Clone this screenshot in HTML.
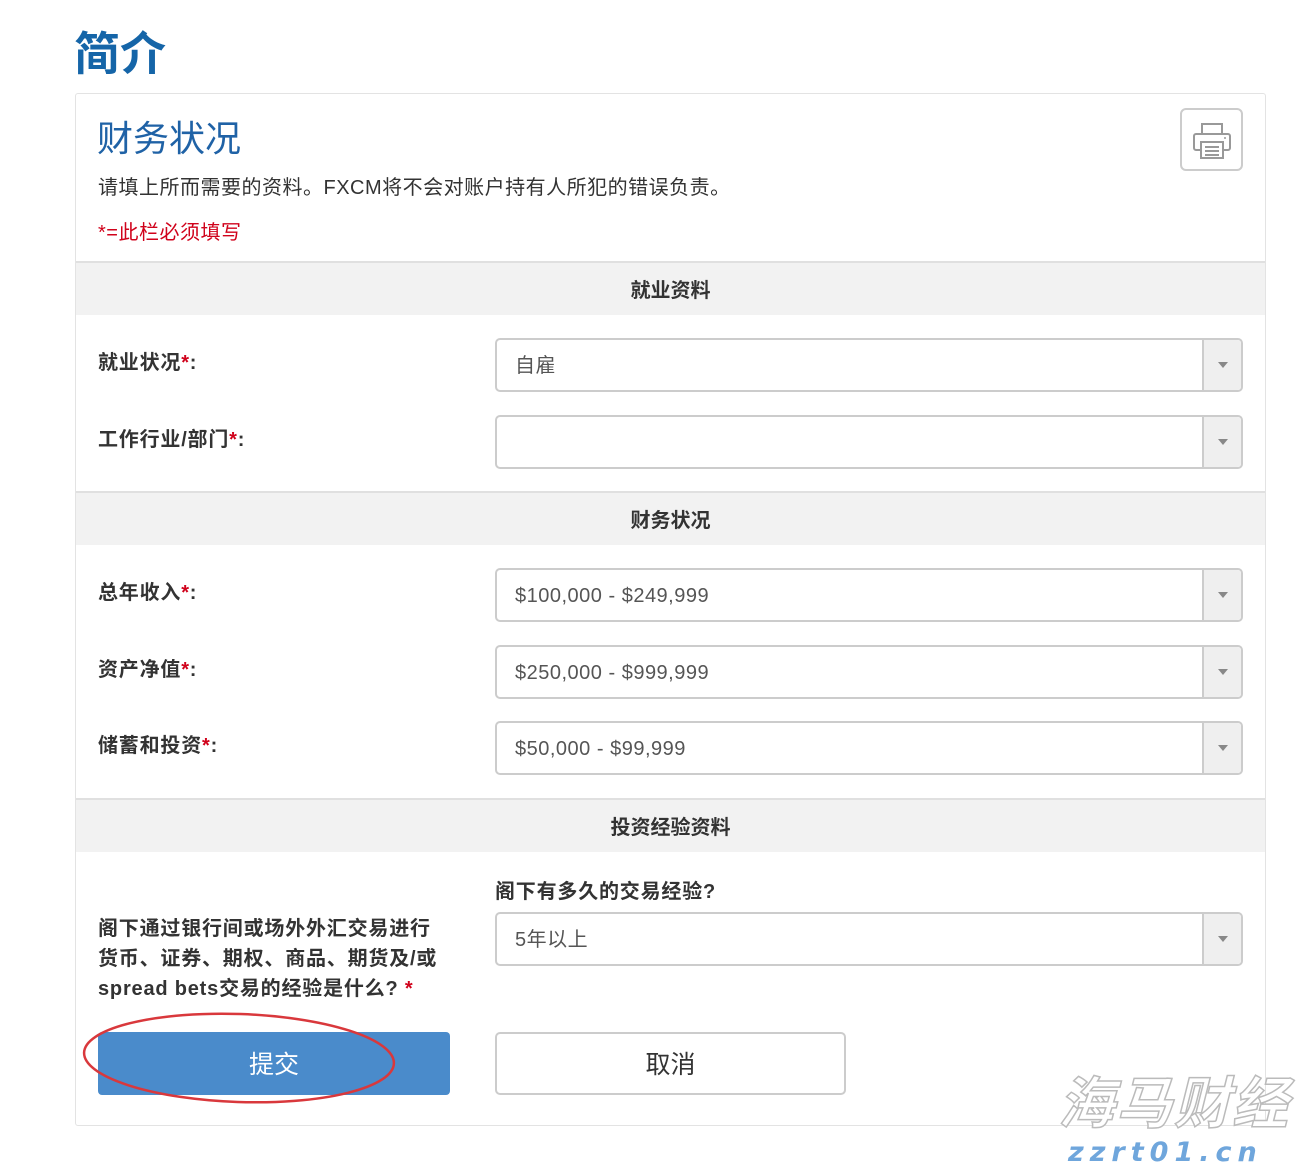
<!DOCTYPE html>
<html><head><meta charset="utf-8">
<style>
*{margin:0;padding:0;box-sizing:border-box}
body{width:1302px;height:1168px;background:#fff;position:relative;overflow:hidden;font-family:"Liberation Sans","Noto Sans CJK SC",sans-serif;color:#333}
.a{position:absolute}
.h1{left:74px;top:23px;font-size:46px;font-weight:bold;color:#1565a8;line-height:62px}
.card{left:75px;top:93px;width:1191px;height:1033px;border:1px solid #e3e3e3;border-radius:3px}
.sec{left:76px;width:1189px;height:54px;background:#f2f2f2;border-top:2px solid #e0e0e0;font-size:20px;font-weight:bold;text-align:center;line-height:56px;color:#333}
.lab{left:98px;font-size:20px;font-weight:bold;color:#333;line-height:30px;letter-spacing:0.8px}
.lab i{font-style:normal;color:#d0021b}
.sel{left:495px;width:748px;height:54px;border:2px solid #ccc;border-radius:5px;font-size:20px;color:#555;line-height:52px;padding-left:18px;background:#fff;letter-spacing:0.5px}
.sel .ar{position:absolute;right:0;top:0;width:39px;height:50px;background:#efefef;border-left:2px solid #ccc;border-radius:0 4px 4px 0}
.sel .ar:after{content:"";position:absolute;left:14px;top:22px;border-left:5px solid transparent;border-right:5px solid transparent;border-top:6px solid #888}
</style></head><body>
<div class="a h1">简介</div>
<div class="a card"></div>
<div class="a" style="left:97px;top:115px;font-size:36px;color:#1f62a6;line-height:48px">财务状况</div>
<div class="a" style="left:98px;top:174px;font-size:20px;color:#333;line-height:28px;letter-spacing:0.5px">请填上所而需要的资料。FXCM将不会对账户持有人所犯的错误负责。</div>
<div class="a" style="left:98px;top:219px;font-size:20px;color:#d0021b;line-height:28px;letter-spacing:0.5px">*=此栏必须填写</div>
<div class="a" style="left:1180px;top:108px;width:63px;height:63px;border:2px solid #ccc;border-radius:6px">
<svg width="59" height="59" viewBox="0 0 59 59"><g fill="none" stroke="#999" stroke-width="2"><rect x="20" y="14" width="20" height="10"/><rect x="12" y="24" width="36" height="16" rx="2"/><rect x="19" y="32" width="22" height="16" fill="#fff"/><line x1="23" y1="37" x2="37" y2="37"/><line x1="23" y1="41" x2="37" y2="41"/><line x1="23" y1="45" x2="37" y2="45"/></g><circle cx="43" cy="28" r="1" fill="#999"/></svg></div>

<div class="a sec" style="top:261px">就业资料</div>
<div class="a lab" style="top:348px">就业状况<i>*</i>:</div>
<div class="a sel" style="top:338px">自雇<span class="ar"></span></div>
<div class="a lab" style="top:425px">工作行业/部门<i>*</i>:</div>
<div class="a sel" style="top:415px"><span class="ar"></span></div>

<div class="a sec" style="top:491px">财务状况</div>
<div class="a lab" style="top:578px">总年收入<i>*</i>:</div>
<div class="a sel" style="top:568px">$100,000 - $249,999<span class="ar"></span></div>
<div class="a lab" style="top:655px">资产净值<i>*</i>:</div>
<div class="a sel" style="top:645px">$250,000 - $999,999<span class="ar"></span></div>
<div class="a lab" style="top:731px">储蓄和投资<i>*</i>:</div>
<div class="a sel" style="top:721px">$50,000 - $99,999<span class="ar"></span></div>

<div class="a sec" style="top:798px">投资经验资料</div>
<div class="a lab" style="left:495px;top:877px">阁下有多久的交易经验?</div>
<div class="a sel" style="top:912px">5年以上<span class="ar"></span></div>
<div class="a lab" style="top:914px">阁下通过银行间或场外外汇交易进行<br>货币、证券、期权、商品、期货及/或<br>spread bets交易的经验是什么? <i>*</i></div>

<div class="a" style="left:98px;top:1032px;width:352px;height:63px;background:#4a8bcb;border-radius:4px;color:#fff;font-size:25px;text-align:center;line-height:66px">提交</div>
<div class="a" style="left:495px;top:1032px;width:351px;height:63px;border:2px solid #ccc;border-radius:5px;color:#333;font-size:25px;text-align:center;line-height:62px">取消</div>
<svg class="a" style="left:0;top:0" width="1302" height="1168"><ellipse cx="239" cy="1058" rx="155" ry="44" fill="none" stroke="#d9383c" stroke-width="2.5" transform="rotate(2 239 1058)"/></svg>

<div class="a" style="left:1058px;top:1068px;font-size:56px;font-style:italic;font-weight:bold;color:#fff;-webkit-text-stroke:1.5px #bbb;letter-spacing:2px;line-height:64px;font-family:'Noto Sans CJK SC',sans-serif">海马财经</div>
<div class="a" style="left:1068px;top:1138px;font-size:27px;font-style:italic;font-weight:bold;color:#6fa6dc;letter-spacing:6px;line-height:30px;font-family:'DejaVu Sans',sans-serif">zzrt01.cn</div>
</body></html>
